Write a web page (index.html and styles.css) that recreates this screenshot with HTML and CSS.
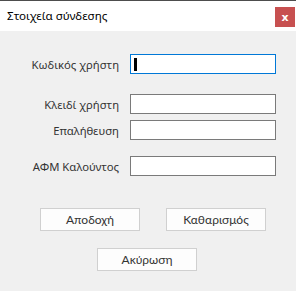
FILE: index.html
```html
<!DOCTYPE html>
<html lang="el">
<head>
    <meta charset="UTF-8">
    <title>Στοιχεία σύνδεσης</title>
    <link rel="stylesheet" href="styles.css">
</head>
<body>
    <div class="window">
        <div class="titlebar">
            <span class="title">Στοιχεία σύνδεσης</span>
            <span class="close">x</span>
        </div>

        <div class="form">
            <div class="row first">
                <label>Κωδικός χρήστη</label>
                <div class="field active"><span class="caret"></span></div>
            </div>
            <div class="row gap-big">
                <label>Κλειδί χρήστη</label>
                <div class="field"></div>
            </div>
            <div class="row gap-small">
                <label>Επαλήθευση</label>
                <div class="field"></div>
            </div>
            <div class="row gap-mid">
                <label>ΑΦΜ Καλούντος</label>
                <div class="field"></div>
            </div>
        </div>

        <div class="buttons">
            <div class="button-row">
                <button>Αποδοχή</button>
                <button>Καθαρισμός</button>
            </div>
            <div class="button-row single">
                <button>Ακύρωση</button>
            </div>
        </div>
    </div>
</body>
</html>
```

FILE: styles.css
```css
body {
    margin: 0;
    padding: 0;
    background-color: #f0f0f0;
    font-family: "Noto Sans", "Open Sans", sans-serif;
}
.window {
    width: 296px;
    height: 291px;
    border-top: 1px solid #4d4d4d;
    box-sizing: border-box;
    background-color: #f0f0f0;
}
.titlebar {
    height: 30px;
    background-color: white;
    display: flex;
    align-items: center;
    justify-content: space-between;
}
.title {
    font-size: 11.6px;
    color: #000;
    margin-left: 7px;
    margin-top: -1px;
}
.close {
    width: 20px;
    height: 20px;
    margin-right: 1px;
    margin-top: 2px;
    background-color: #c75050;
    color: white;
    font-family: "DejaVu Sans", sans-serif;
    font-weight: bold;
    font-size: 11px;
    display: flex;
    align-items: center;
    justify-content: center;
    line-height: 1;
}
.form {
    display: flex;
    flex-direction: column;
}
.row {
    display: grid;
    grid-template-columns: 120px 146px;
    column-gap: 10px;
    align-items: center;
}
.row.first {
    margin-top: 23px;
}
.row.gap-big {
    margin-top: 20px;
}
.row.gap-small {
    margin-top: 6px;
}
.row.gap-mid {
    margin-top: 16px;
}
.row label {
    text-align: right;
    font-size: 11.3px;
    color: #333;
    padding-right: 1px;
}
.field {
    height: 20px;
    box-sizing: border-box;
    background-color: white;
    border: 1px solid #7a7a7a;
    position: relative;
}
.field.active {
    border-color: #0078d7;
}
.caret {
    position: absolute;
    left: 3px;
    top: 3px;
    width: 3px;
    height: 13px;
    background-color: black;
}
.buttons {
    display: flex;
    flex-direction: column;
    align-items: center;
    margin-top: 32px;
    gap: 17px;
}
.button-row {
    display: flex;
    gap: 26px;
    margin-left: 10px;
}
.button-row.single {
    margin-left: -2px;
}
.buttons button {
    width: 100px;
    height: 23px;
    background-color: #fdfdfd;
    border: 1px solid #d0d0d0;
    font-family: "Lato", sans-serif;
    font-size: 12px;
    color: #333;
    padding: 0;
}
```
